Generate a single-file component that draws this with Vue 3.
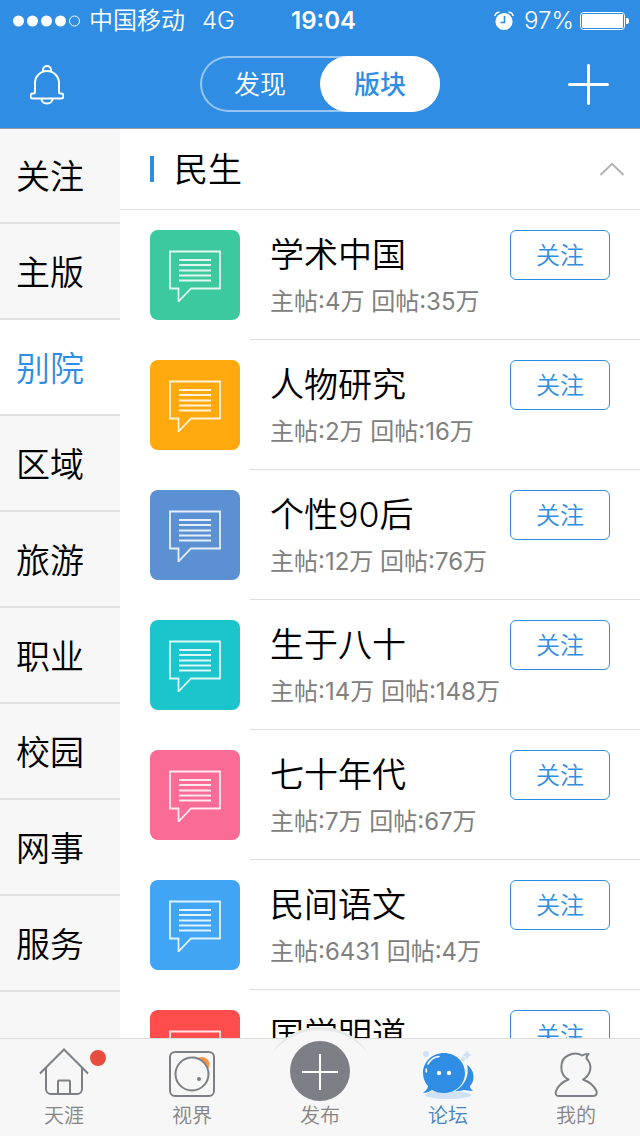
<script setup>
import { ref } from "vue";

const segments = ["发现", "版块"];
const activeSegment = ref("版块");

const categories = ["关注", "主版", "别院", "区域", "旅游", "职业", "校园", "网事", "服务"];
const activeCategory = ref("别院");

const expanded = ref(true);
const boards = ref([
  { name: "学术中国", stats: "主帖:4万 回帖:35万", tone: "green" },
  { name: "人物研究", stats: "主帖:2万 回帖:16万", tone: "orange" },
  { name: "个性90后", stats: "主帖:12万 回帖:76万", tone: "indigo" },
  { name: "生于八十", stats: "主帖:14万 回帖:148万", tone: "teal" },
  { name: "七十年代", stats: "主帖:7万 回帖:67万", tone: "pink" },
  { name: "民间语文", stats: "主帖:6431 回帖:4万", tone: "sky" },
  { name: "国学明道", stats: "", tone: "red" },
]);
</script>

<template>
  <div class="app">
    <header class="top">
      <div class="status">
        <div class="status-left">
          <svg class="signal" width="68" height="12" viewBox="0 0 68 12">
            <g fill="#fff">
              <circle cx="5.5" cy="6" r="5.5" />
              <circle cx="19.5" cy="6" r="5.5" />
              <circle cx="33.5" cy="6" r="5.5" />
              <circle cx="47.5" cy="6" r="5.5" />
            </g>
            <circle cx="61.5" cy="6" r="5" fill="none" stroke="#fff" />
          </svg>
          <span class="carrier">中国移动</span>
          <span>4G</span>
        </div>
        <span class="time">19:04</span>
        <div class="status-right">
          <svg class="alarm" width="20" height="20" viewBox="0 0 20 20">
            <circle cx="10" cy="10.5" r="8.6" fill="#fff" />
            <path d="M1 5C1 3 3 1 5.5 1.2M19 5C19 3 17 1 14.5 1.2" fill="none" stroke="#fff" stroke-width="1.6" />
            <path d="M10.5 5V11.5H6.5" fill="none" stroke="#2f8de4" stroke-width="1.6" />
          </svg>
          <span>97%</span>
          <svg width="50" height="20" viewBox="0 0 50 20">
            <rect x="0.5" y="1.5" width="44" height="17" rx="3" fill="none" stroke="#fff" />
            <rect x="2" y="3" width="41" height="14" rx="1" fill="#fff" />
            <path d="M46 7h1a2 2 0 0 1 2 2v2a2 2 0 0 1-2 2h-1z" fill="#fff" />
          </svg>
        </div>
      </div>

      <nav class="navbar">
        <button class="icon-button" aria-label="消息">
          <svg width="34" height="42" viewBox="0 -1 34 42" fill="none" stroke="#fff" stroke-width="2">
            <path d="M5 28V19a12 12 0 0 1 24 0V28C29 29 30 29.500 31 29.500a2.500 2.500 0 0 1 0 5H3a2.500 2.500 0 0 1 0-5C4 29.500 5 29 5 28Z" />
            <path d="M13 8V6a4 4 0 0 1 8 0V8M11.500 35C12 41 22 41 22.500 35" />
          </svg>
        </button>
        <div class="segmented">
          <button
            v-for="s in segments"
            :key="s"
            class="segment"
            :class="{ 'segment-active': s === activeSegment }"
            @click="activeSegment = s"
          >
            {{ s }}
          </button>
        </div>
        <button class="icon-button icon-add" aria-label="添加">
          <svg width="42" height="42" viewBox="0 0 42 42" stroke="#fff" stroke-width="3" stroke-linecap="round">
            <path d="M1.500 21.500H39.500M20.500 2.500V40.500" />
          </svg>
        </button>
      </nav>
    </header>

    <main class="content">
      <aside class="sidebar">
        <button
          v-for="c in categories"
          :key="c"
          class="category"
          :class="{ 'category-active': c === activeCategory }"
          @click="activeCategory = c"
        >
          {{ c }}
        </button>
      </aside>

      <section class="boards">
        <div class="group">
          <h2 class="group-title">民生</h2>
          <button class="icon-button" aria-label="收起" @click="expanded = !expanded">
            <svg width="26" height="14" viewBox="0 0 26 14" fill="none" stroke="#b2b2b2" stroke-width="2">
              <path d="M1.500 13L13 1.800L24.500 13" />
            </svg>
          </button>
        </div>
        <ul v-if="expanded" class="list">
          <li v-for="b in boards" :key="b.name" class="board">
            <div class="thumb" :class="'thumb-' + b.tone">
              <svg width="52" height="54" viewBox="0 -2 52 54" fill="none" stroke="#fff" stroke-opacity="0.85">
                <path d="M1 1.500H51V38.500H22L9.500 51.500V38.500H1Z" stroke-width="1.800" />
                <path d="M10 10H42M10 15H42M10 20.500H42M10 25.500H42M10 30.500H42" stroke-width="1.800" />
              </svg>
            </div>
            <div class="board-body">
              <div class="board-text">
                <h3 class="board-name">{{ b.name }}</h3>
                <p v-if="b.stats" class="board-stats">{{ b.stats }}</p>
              </div>
              <button class="follow">关注</button>
            </div>
          </li>
        </ul>
      </section>
    </main>

    <nav class="tabbar">
      <button class="tab">
        <svg class="tab-icon" viewBox="0 0 64 52" fill="none" stroke="#7c8086" stroke-width="2">
          <path d="M8 27.500L32 3.500L56 27.500" />
          <path d="M14 22V43a5 5 0 0 0 5 5H45a5 5 0 0 0 5-5V22M26 48V35.500a1 1 0 0 1 1-1H37a1 1 0 0 1 1 1V48" />
        </svg>
        <span>天涯</span>
        <i class="badge"></i>
      </button>
      <button class="tab">
        <svg class="tab-icon" viewBox="0 0 64 52" fill="none" stroke="#7c8086" stroke-width="2">
          <rect x="10" y="6" width="44" height="44" rx="5" />
          <circle cx="42" cy="18.500" r="7.500" fill="#ff9342" stroke="none" />
          <circle cx="32" cy="28" r="16.500" fill="#f7f7f7" />
          <circle cx="39" cy="33" r="2" fill="#7c8086" stroke="none" />
        </svg>
        <span>视界</span>
      </button>
      <button class="tab tab-publish">
        <!-- raised bump behind the round publish button -->
        <svg class="bump" viewBox="0 0 100 40">
          <path d="M2 28A57 57 0 0 1 98 28V40H2Z" fill="#f7f7f7" />
          <path d="M2 28A57 57 0 0 1 98 28A62 62 0 0 0 2 28Z" fill="#e6e8e8" />
        </svg>
        <svg class="tab-icon" viewBox="0 0 64 52">
          <circle cx="32" cy="25" r="30" fill="#7c8086" />
          <path d="M14 26H50M32 8V44" stroke="#fff" stroke-width="2" />
        </svg>
        <span>发布</span>
      </button>
      <button class="tab tab-active">
        <svg class="tab-icon" viewBox="0 0 64 52">
          <ellipse cx="32" cy="49" rx="23" ry="4" fill="#cfe2f5" />
          <circle cx="10" cy="8" r="3" fill="#cfe2f5" />
          <circle cx="47" cy="13" r="2.200" fill="#cfe2f5" />
          <path d="M51 4Q52 8 56 9Q52 10 51 14Q50 10 46 9Q50 8 51 4Z" fill="#cfe2f5" />
          <path d="M51 19C58 23 60 34 54 40C54 42 55 43 57 45C53 45 50 44 48 44C45 45 42 45 39 45C48 40 54 30 51 19Z" fill="#2f8de4" />
          <path d="M28 7C40 7 49 16 49 27S40 47 28 47C23 47 19 46 16 44C13 46 10 47 7 47C9 45 12 43 12 40C9 37 7 32 7 27C7 16 16 7 28 7Z" fill="#2f8de4" />
          <circle cx="23" cy="27" r="2.200" fill="#fff" />
          <circle cx="33" cy="27" r="2.200" fill="#fff" />
          <path d="M12 18C14 14 18 11 23 10.500M10.300 23V26" fill="none" stroke="#fff" stroke-width="1.600" stroke-linecap="round" />
        </svg>
        <span>论坛</span>
      </button>
      <button class="tab">
        <svg class="tab-icon" viewBox="0 0 64 52" fill="none" stroke="#7c8086" stroke-width="2" stroke-linejoin="round">
          <path d="M24.500 33.500C15 29 15 14 24 9.500C29 7 34 7 38 9.500C40 8 42 8 44.500 8C43 9.500 42.500 11 42.500 12.500C49 19 47 29 39 33.500C46 36 50 40 52.500 45C53.500 48 52 50 49 50H15C12 50 11 48 12 45C14 40 18 36 24.500 33.500Z" />
        </svg>
        <span>我的</span>
      </button>
    </nav>
  </div>
</template>

<style>
body {
  margin: 0;
}
</style>

<style scoped>
.app {
  display: flex;
  flex-direction: column;
  height: 100vh;
  background: #fff;
  color: #000;
  font-family: Inter, "Noto Sans CJK SC", sans-serif;
  font-weight: 350;
}

button {
  margin: 0;
  padding: 0;
  border: none;
  background: transparent;
  color: inherit;
  font: inherit;
  cursor: pointer;
}

svg {
  display: block;
  flex: none;
}

.top {
  position: relative;
  flex: none;
  background: #2f8de4;
  box-shadow: 0 1px 0 #9a9ea3;
  color: #fff;
}

.status {
  display: grid;
  grid-template-columns: 1fr auto 1fr;
  align-items: center;
  box-sizing: border-box;
  height: 40px;
  padding: 2px 10px 0 13px;
  font-size: 24px;
  line-height: 38px;
}

.status-left,
.status-right {
  display: flex;
  align-items: center;
}

.status-right {
  justify-content: flex-end;
  gap: 6px;
}

.carrier {
  margin: 0 17px 0 8px;
}

.time {
  padding-left: 4px;
  font-weight: 600;
}

.alarm {
  margin-right: 4px;
}

.navbar {
  display: grid;
  grid-template-columns: 1fr auto 1fr;
  align-items: center;
  height: 88px;
  padding: 0 30px;
}

.icon-button {
  display: flex;
}

.icon-add {
  justify-self: end;
}

.segmented {
  display: flex;
  width: 240px;
  height: 56px;
  border-radius: 28px;
  box-shadow: inset 0 0 0 2px rgba(255, 255, 255, 0.5);
}

.segment {
  flex: 1;
  padding-bottom: 4px;
  border-radius: 28px;
  font-size: 26px;
}

.segment-active {
  background: #fff;
  color: #2f8de4;
  font-weight: 500;
}

.content {
  flex: 1;
  display: flex;
  min-height: 0;
}

.sidebar {
  flex: none;
  width: 120px;
  overflow: hidden;
  background: #f7f7f7;
}

.category {
  display: block;
  width: 100%;
  height: 96px;
  padding: 0 0 2px 16px;
  border-bottom: 2px solid #dfdfdf;
  font-size: 34px;
  text-align: left;
}

.category-active {
  background: #fff;
  color: #2f8de4;
}

.boards {
  flex: 1;
  min-width: 0;
  overflow: hidden;
}

.group {
  display: flex;
  align-items: center;
  justify-content: space-between;
  height: 81px;
  padding: 0 15px 0 30px;
  border-bottom: 1px solid #dfdfdf;
}

.group-title {
  margin: 0;
  padding: 2px 0 0 20px;
  border-left: 4px solid #2f8de4;
  font-size: 34px;
  font-weight: inherit;
  line-height: 24px;
}

.list {
  margin: 0;
  padding: 0;
  list-style: none;
}

.board {
  display: flex;
  gap: 10px;
  padding-left: 30px;
}

.thumb {
  display: flex;
  flex: none;
  align-items: center;
  justify-content: center;
  width: 90px;
  height: 90px;
  margin-top: 20px;
  border-radius: 8px;
}

.thumb-green {
  background: #3dc9a0;
}

.thumb-orange {
  background: #ffa90f;
}

.thumb-indigo {
  background: #5b91d2;
}

.thumb-teal {
  background: #1bc5cc;
}

.thumb-pink {
  background: #fa6b95;
}

.thumb-sky {
  background: #40a5f5;
}

.thumb-red {
  background: #ff4d4d;
}

.board-body {
  flex: 1;
  display: flex;
  align-items: flex-start;
  justify-content: space-between;
  box-sizing: border-box;
  min-width: 0;
  height: 130px;
  padding: 20px 30px 0 20px;
  border-bottom: 1px solid #dfdfdf;
}

.board-text {
  flex: 1;
  min-width: 0;
  white-space: nowrap;
}

.board-name {
  margin: 0;
  font-size: 34px;
  font-weight: inherit;
  line-height: 50px;
}

.board-stats {
  margin: 0;
  color: #808080;
  font-size: 24px;
  font-weight: 400;
  line-height: 44px;
}

.follow {
  flex: none;
  box-sizing: border-box;
  width: 100px;
  height: 50px;
  padding-bottom: 4px;
  border: 1px solid #2f8de4;
  border-radius: 6px;
  color: #2f8de4;
  font-size: 24px;
}

.tabbar {
  flex: none;
  display: flex;
  height: 97px;
  border-top: 1px solid #dcdcdc;
  background: #f7f7f7;
}

.tab {
  position: relative;
  flex: 1;
  display: flex;
  flex-direction: column;
  align-items: center;
  padding-top: 7px;
  color: #858585;
  font-size: 20px;
  line-height: 36px;
}

.tab-icon {
  position: relative;
  width: 64px;
  height: 52px;
  overflow: visible;
}

.tab-active {
  color: #4384c0;
}

.bump {
  position: absolute;
  top: -14px;
  left: 50%;
  width: 100px;
  height: 40px;
  margin-left: -50px;
}

.badge {
  position: absolute;
  top: 11px;
  left: 50%;
  width: 16px;
  height: 16px;
  margin-left: 26px;
  border-radius: 50%;
  background: #e84e40;
}
</style>
